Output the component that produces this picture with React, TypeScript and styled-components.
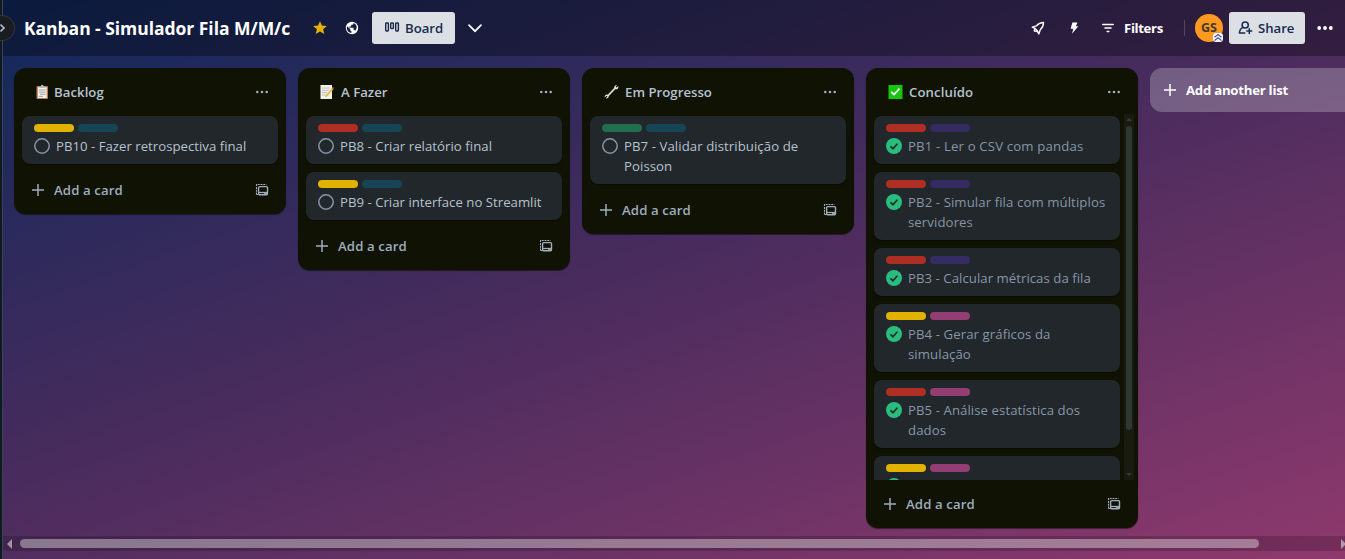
import React from 'react';
import styled, { createGlobalStyle } from 'styled-components';

const Global = createGlobalStyle`
  *, *::before, *::after { box-sizing: border-box; }
  body {
    margin: 0;
    overflow: hidden;
    font-family: 'Open Sans', 'Noto Sans', sans-serif;
    font-size: 13.2px;
    line-height: 20px;
    color: #b6c2cf;
  }
  svg { display: block; flex: none; }
`;

const Page = styled.div`
  display: flex;
  width: 100vw;
  height: 100vh;
  overflow: hidden;
`;

const Rail = styled.div`
  position: relative;
  flex: none;
  width: 3px;
  background: #14181f;
  border-right: 1px solid #344563;
  z-index: 2;
`;

const RailToggle = styled.div`
  position: absolute;
  left: -12px;
  top: 15px;
  width: 27px;
  height: 26px;
  border-radius: 50%;
  background: #1a1d20;
  border: 1px solid #33363a;
  display: flex;
  align-items: center;
  justify-content: center;
  color: #b0bac6;
`;

const BoardArea = styled.main`
  flex: 1;
  min-width: 0;
  display: flex;
  flex-direction: column;
  background: linear-gradient(161deg, #10285a, #492c5d 48%, #8f396d);
`;

const Header = styled.header`
  flex: none;
  height: 56px;
  display: flex;
  align-items: center;
  justify-content: space-between;
  padding-left: 21px;
  background: rgba(0, 0, 0, 0.32);
  color: #fff;
`;

const HeaderGroup = styled.div`
  display: flex;
  align-items: center;
`;

const Title = styled.h1`
  width: 283px;
  margin: 0;
  font-size: 17.5px;
  line-height: 24px;
  font-weight: 700;
  letter-spacing: -0.04px;
  white-space: nowrap;
`;

const IconSlot = styled.span<{ $w: number }>`
  width: ${(p) => p.$w}px;
  height: 32px;
  display: flex;
  align-items: center;
  justify-content: center;
`;

const LightButton = styled.button<{ $w: number; $ml?: number; $pl?: number }>`
  width: ${(p) => p.$w}px;
  height: 32px;
  margin: 0 0 0 ${(p) => p.$ml ?? 0}px;
  padding: 0 0 0 ${(p) => p.$pl ?? 8}px;
  border: 0;
  border-radius: 3px;
  background: #dcdfe4;
  color: #172b4d;
  display: flex;
  align-items: center;
  gap: 5px;
  font: 600 13.2px/20px 'Open Sans', sans-serif;
  letter-spacing: -0.05px;
  white-space: nowrap;
`;

const FiltersButton = styled.div`
  width: 71px;
  display: flex;
  align-items: center;
  gap: 10px;
  font-weight: 700;
  letter-spacing: -0.35px;
`;

const Divider = styled.span`
  width: 1px;
  height: 16px;
  margin: 0 10px 0 11px;
  background: rgba(255, 255, 255, 0.18);
`;

const Avatar = styled.span`
  position: relative;
  width: 28px;
  height: 28px;
  border-radius: 50%;
  background: #ff991f;
  color: #44382e;
  font-size: 12.5px;
  font-weight: 700;
  line-height: 28px;
  text-align: center;
`;

const AvatarBadge = styled.span`
  position: absolute;
  right: 0;
  bottom: 0;
`;

const Lists = styled.div`
  flex: 1;
  min-height: 0;
  display: flex;
  align-items: flex-start;
  gap: 12px;
  padding: 12px 0 0 11px;
  overflow: hidden;
`;

const ListBox = styled.section`
  flex: none;
  width: 272px;
  border-radius: 12px;
  background: #101204;
  box-shadow: 0 1px 1px rgba(3, 4, 4, 0.5);
`;

const ListHeader = styled.div`
  height: 46px;
  padding: 2px 16px 0 20px;
  display: flex;
  align-items: center;
  color: #9fadbc;
`;

const ListTitle = styled.h2<{ $gap: number; $ls: number }>`
  flex: 1;
  margin: 0 0 0 ${(p) => p.$gap}px;
  font-size: 13.2px;
  line-height: 20px;
  font-weight: 600;
  letter-spacing: ${(p) => p.$ls}px;
  color: #b6c2cf;
`;

const ListBody = styled.div<{ $scroll?: boolean }>`
  display: flex;
  justify-content: space-between;
  padding: 0 ${(p) => (p.$scroll ? 4 : 8)}px 0 8px;
  height: ${(p) => (p.$scroll ? '366px' : 'auto')};
  overflow: hidden;
`;

const Cards = styled.div<{ $scroll?: boolean }>`
  width: ${(p) => (p.$scroll ? 246 : 256)}px;
  padding: 2px 0;
  display: flex;
  flex-direction: column;
  gap: 8px;
`;

const CardBox = styled.article`
  flex: none;
  padding: 8px 10px 8px 12px;
  border-radius: 8px;
  background: #22272b;
  box-shadow: 0 1px 1px rgba(3, 4, 4, 0.5);
`;

const Labels = styled.div`
  display: flex;
  gap: 4px;
  margin-bottom: 4px;
`;

const Label = styled.span<{ $color: string }>`
  width: 40px;
  height: 8px;
  border-radius: 4px;
  background: ${(p) => p.$color};
`;

const CardRow = styled.div`
  display: flex;
  gap: 6px;
  svg { margin-top: 2px; }
`;

const CardText = styled.span<{ $done?: boolean; $ls: number }>`
  letter-spacing: ${(p) => p.$ls}px;
  color: ${(p) => (p.$done ? '#8696a7' : '#b6c2cf')};
  white-space: pre;
`;

const ListFooter = styled.div`
  height: 48px;
  padding: 0 17px 0 18px;
  display: flex;
  align-items: center;
  color: #9fadbc;
  font-weight: 600;
`;

const AddText = styled.span`
  flex: 1;
  margin-left: 10px;
  letter-spacing: 0.1px;
`;

const ScrollTrack = styled.div`
  width: 10px;
  height: 366px;
  padding: 4px 2px;
  background: #191b10;
  display: flex;
  flex-direction: column;
  align-items: center;
  justify-content: space-between;
`;

const ScrollThumb = styled.div`
  width: 6px;
  height: 304px;
  margin: 5px 0 auto;
  border-radius: 3px;
  background: #2f3833;
`;

const ScrollArrow = styled.span<{ $down?: boolean }>`
  border: 3px solid transparent;
  border-${(p) => (p.$down ? 'top' : 'bottom')}-color: #333c37;
  border-${(p) => (p.$down ? 'bottom' : 'top')}-width: 0;
`;

const AddList = styled.div`
  flex: none;
  width: 272px;
  height: 44px;
  padding-left: 14px;
  border-radius: 12px;
  background: rgba(255, 255, 255, 0.24);
  color: #fff;
  display: flex;
  align-items: center;
  gap: 10px;
  font-weight: 700;
  letter-spacing: -0.25px;
`;

const BoardScroll = styled.div`
  flex: none;
  height: 15px;
  margin: 0 0 8px;
  padding: 0 0 0 4px;
  display: flex;
  align-items: center;
  overflow: hidden;
  background: rgba(0, 0, 0, 0.18);
`;

const BoardThumb = styled.div`
  flex: none;
  width: 1239px;
  height: 9px;
  margin: 0 82px 0 8px;
  border-radius: 5px;
  background: rgba(255, 255, 255, 0.38);
`;

const SideArrow = styled.span<{ $right?: boolean }>`
  flex: none;
  border: 5px solid transparent;
  border-${(p) => (p.$right ? 'left' : 'right')}-color: rgba(255, 255, 255, 0.5);
  border-${(p) => (p.$right ? 'right' : 'left')}-width: 0;
`;

const Dots = ({ r = 1.3, step = 4.7, size = 16 }: { r?: number; step?: number; size?: number }) => (
  <svg width={size} height={size} viewBox={`0 0 ${size} ${size}`} fill="currentColor">
    {[-1, 0, 1].map((i) => (
      <circle key={i} cx={size / 2 + i * step} cy={size / 2} r={r} />
    ))}
  </svg>
);

const Plus = () => (
  <svg width="12" height="12" viewBox="0 0 12 12" stroke="currentColor" strokeWidth="1.5">
    <path d="M6 0v12M0 6h12" />
  </svg>
);

const Star = () => (
  <svg width="16" height="16" viewBox="0 0 16 16" fill="#e2b203">
    <path d="M8 1.2l1.9 4.4 4.9.4-3.700 3.200 1.200 4.900L8 11.600l-4.300 2.500 1.200-4.900L1.200 6l4.900-.4z" />
  </svg>
);

const Globe = () => (
  <svg width="14" height="14" viewBox="0 0 14 14">
    <circle cx="7" cy="7" r="6.2" fill="#fff" />
    <path d="M2 5.2l3.2 2.9v1.1l1.2 1v1.9C3.900 11.800 1.800 9.700 1.800 7c0-.6.1-1.200.2-1.800zM8.600 2.100v.5c0 .6-.5 1.100-1.200 1.100H6.200v1.200c0 .3-.3.600-.6.600H4.400v1.200H8c.3 0 .6.300.6.600v1.700h.6c.500 0 .9.300 1.100.8 1.800-2.100 2.500-5.900-1.700-7.700z" fill="#151e40" />
  </svg>
);

const BoardIcon = () => (
  <svg width="16" height="16" viewBox="0 0 16 16" fill="none" stroke="currentColor" strokeWidth="1.4">
    <rect x="1.7" y="3" width="2.700" height="8" rx=".7" />
    <rect x="6.700" y="3" width="2.700" height="5.500" rx=".7" />
    <rect x="11.700" y="3" width="2.700" height="8" rx=".7" />
  </svg>
);

const Chevron = () => (
  <svg width="16" height="16" viewBox="0 0 16 16" fill="none" stroke="currentColor" strokeWidth="1.7" strokeLinecap="round">
    <path d="M2 5.200l6 6 6-6" />
  </svg>
);

const Rocket = () => (
  <svg width="16" height="16" viewBox="0 0 16 16" fill="none" stroke="currentColor" strokeWidth="1.400" strokeLinejoin="round" strokeLinecap="round">
    <path d="M13.500 2.500c-3.100.1-5.200 1.200-7.100 3.400L2.300 7.200l2.500 1.100-.5 2.700 3 .4 1.500 2.500 1.600-4.300c2.100-1.900 3.100-4.200 3.100-7.100z" />
    <path d="M4.800 8.300l3 3" />
  </svg>
);

const Bolt = () => (
  <svg width="16" height="16" viewBox="0 0 16 16" fill="currentColor">
    <path d="M6.400 2.500h5L9.900 6.300h2.400L6 13.700l1.300-5H4.600z" />
  </svg>
);

const FilterIcon = () => (
  <svg width="12" height="12" viewBox="0 0 12 12" stroke="currentColor" strokeWidth="1.500" strokeLinecap="round">
    <path d="M.8 2.400h10.400M3 6h6M5.200 9.500h1.600" />
  </svg>
);

const SharePerson = () => (
  <svg width="16" height="16" viewBox="0 0 16 16" fill="none" stroke="currentColor" strokeWidth="1.500" strokeLinecap="round">
    <circle cx="8.200" cy="5" r="3.100" />
    <path d="M6 7.400c-2.400 1-3.500 2.700-3.500 5.700h5.200M12.300 8.700v4.800M9.900 11.100h4.800" />
  </svg>
);

const AdminBadge = () => (
  <svg width="10" height="9" viewBox="0 0 10 9">
    <rect width="10" height="9" rx="3" fill="#fff" />
    <path d="M1.500 4.300L5 1.500l3.500 2.800M1.500 7.600L5 4.800l3.500 2.800" fill="none" stroke="#4b4fb5" strokeWidth="1.300" />
  </svg>
);

const TemplateIcon = () => (
  <svg width="14" height="14" viewBox="0 0 14 14" fill="none" stroke="currentColor">
    <path d="M1.500 11.500V1.500H11.500" strokeWidth="1.100" strokeDasharray="2 .8" />
    <path d="M1.500 11.500h2" strokeWidth="1" />
    <rect x="3.600" y="3.600" width="8.900" height="8.200" rx="1" strokeWidth="1.400" />
    <path d="M3.600 9.500h8.900" strokeWidth="1.300" />
    <path d="M9 10.800h3.500" strokeWidth="1.400" />
  </svg>
);

const Check = ({ done }: { done?: boolean }) => (
  <svg width="16" height="16" viewBox="0 0 16 16" fill="none">
    {done ? (
      <>
        <circle cx="8" cy="8" r="8" fill="#2abb7f" />
        <path d="M4.500 8.300l2.400 2.400 4.500-5" stroke="#1d2f2c" strokeWidth="1.700" />
      </>
    ) : (
      <circle cx="8" cy="8" r="7.200" stroke="#8696a7" strokeWidth="1.500" />
    )}
  </svg>
);

const Clipboard = () => (
  <svg width="16" height="16" viewBox="0 0 16 16">
    <rect x="2.500" y="2" width="11.500" height="13" rx=".8" fill="#b87b52" />
    <rect x="3.800" y="3.200" width="8.900" height="10.800" fill="#f4f1ee" />
    <path d="M5.300 3.800V2.200h1.500a1.400 1.400 0 0 1 2.800 0H11v1.600z" fill="#aeb2b5" />
    <path d="M4.800 6h6.700M4.800 8.200h6.700M6 10.300h5.500M4.800 12.400h4.200" stroke="#999" strokeWidth=".9" />
  </svg>
);

const Memo = () => (
  <svg width="16" height="16" viewBox="0 0 16 16">
    <path d="M2.500 1H14v14H2.500z" fill="#f0f0ed" />
    <path d="M4 4h8M4 6.300h7M4 8.600h5M4 11h4" stroke="#b6b8ba" strokeWidth=".9" />
    <path d="M7.500 11.500L14 4l1.500 1.300L9 12.400l-2.100.8z" fill="#f2b63a" />
    <path d="M13.500 4.500L15 3l1 1-1.200 1.600z" fill="#d85b72" />
  </svg>
);

const Wrench = () => (
  <svg width="16" height="16" viewBox="0 0 16 16" fill="none" overflow="visible">
    <g transform="translate(1.500 0)">
      <path d="M4.300 11.900l7.600-8" stroke="#d5d5d5" strokeWidth="1.800" />
      <path d="M14.800 1.900l-1.800 1.700-1-.9 1.500-1.700c-1.900-.1-3.200 1.300-2.700 3.200l1.400 1.100c1.800.3 3-1.500 2.600-3.400z" fill="#e8e8e8" />
      <path d="M1.200 13.500l1.800-1.800 1 .9-1.800 2c2 .2 3.400-1.200 2.900-3l-1.300-1.200c-1.800-.2-3 1.400-2.600 3.100z" fill="#e8e8e8" />
    </g>
  </svg>
);

const DoneEmoji = () => (
  <svg width="16" height="16" viewBox="0 0 16 16" overflow="visible">
    <rect x="2.500" y="1" width="14" height="14" fill="#16c60c" />
    <path d="M5.300 7.800l2.700 2.700 5.500-5.800" fill="none" stroke="#fff" strokeWidth="1.800" />
  </svg>
);

const RED = '#ae2e24';
const YELLOW = '#e2b203';
const TEAL = '#164555';
const GREEN = '#216e4e';
const PURPLE = '#352c63';
const PINK = '#943d73';

type CardData = { text: string; labels: [string, string]; done?: boolean; ls?: number };
type ListData = {
  title: string;
  icon: React.ReactNode;
  gap: number;
  ls: number;
  scroll?: boolean;
  cards: CardData[];
};

const lists: ListData[] = [
  {
    title: 'Backlog', icon: <Clipboard />, gap: 4, ls: 0.05,
    cards: [{ text: 'PB10 - Fazer retrospectiva final', labels: [YELLOW, TEAL], ls: 0.01 }],
  },
  {
    title: 'A Fazer', icon: <Memo />, gap: 7, ls: 0,
    cards: [
      { text: 'PB8 - Criar relatório final', labels: [RED, TEAL], ls: 0.04 },
      { text: 'PB9 - Criar interface no Streamlit', labels: [YELLOW, TEAL], ls: 0.01 },
    ],
  },
  {
    title: 'Em Progresso', icon: <Wrench />, gap: 7, ls: 0.02,
    cards: [{ text: 'PB7 - Validar distribuição de\nPoisson', labels: [GREEN, TEAL], ls: 0.07 }],
  },
  {
    title: 'Concluído', icon: <DoneEmoji />, gap: 7, ls: 0.1, scroll: true,
    cards: [
      { text: 'PB1 - Ler o CSV com pandas', labels: [RED, PURPLE], done: true, ls: 0.15 },
      { text: 'PB2 - Simular fila com múltiplos\nservidores', labels: [RED, PURPLE], done: true, ls: 0.09 },
      { text: 'PB3 - Calcular métricas da fila', labels: [RED, PURPLE], done: true, ls: 0.04 },
      { text: 'PB4 - Gerar gráficos da\nsimulação', labels: [YELLOW, PINK], done: true, ls: 0.08 },
      { text: 'PB5 - Análise estatística dos\ndados', labels: [RED, PINK], done: true, ls: 0.07 },
      { text: '', labels: [YELLOW, PINK], done: true },
    ],
  },
];

const Card = ({ card }: { card: CardData }) => (
  <CardBox>
    <Labels>
      {card.labels.map((c) => (
        <Label key={c} $color={c} />
      ))}
    </Labels>
    <CardRow>
      <Check done={card.done} />
      <CardText $done={card.done} $ls={card.ls ?? 0}>{card.text}</CardText>
    </CardRow>
  </CardBox>
);

const List = ({ list }: { list: ListData }) => (
  <ListBox>
    <ListHeader>
      {list.icon}
      <ListTitle $gap={list.gap} $ls={list.ls}>{list.title}</ListTitle>
      <Dots />
    </ListHeader>
    <ListBody $scroll={list.scroll}>
      <Cards $scroll={list.scroll}>
        {list.cards.map((c, i) => (
          <Card key={i} card={c} />
        ))}
      </Cards>
      {list.scroll && (
        <ScrollTrack>
          <ScrollArrow />
          <ScrollThumb />
          <ScrollArrow $down />
        </ScrollTrack>
      )}
    </ListBody>
    <ListFooter>
      <Plus />
      <AddText>Add a card</AddText>
      <TemplateIcon />
    </ListFooter>
  </ListBox>
);

export default function App() {
  return (
    <Page>
      <Global />
      <Rail>
        <RailToggle>
          <svg width="8" height="10" viewBox="0 0 8 10" fill="none" stroke="currentColor" strokeWidth="1.700">
            <path d="M2.500 1.500L6 5 2.500 8.500" />
          </svg>
        </RailToggle>
      </Rail>
      <BoardArea>
        <Header>
          <HeaderGroup>
            <Title>Kanban - Simulador Fila M/M/c</Title>
            <IconSlot $w={26}><Star /></IconSlot>
            <IconSlot $w={38}><Globe /></IconSlot>
            <LightButton $w={83} $ml={1} $pl={12}>
              <BoardIcon />
              Board
            </LightButton>
            <IconSlot $w={40}><Chevron /></IconSlot>
          </HeaderGroup>
          <HeaderGroup>
            <IconSlot $w={36}><Rocket /></IconSlot>
            <IconSlot $w={36}><Bolt /></IconSlot>
            <IconSlot $w={10} />
            <FiltersButton>
              <FilterIcon />
              Filters
            </FiltersButton>
            <Divider />
            <Avatar>
              GS
              <AvatarBadge><AdminBadge /></AvatarBadge>
            </Avatar>
            <LightButton $w={76} $ml={6}>
              <SharePerson />
              Share
            </LightButton>
            <IconSlot $w={40}><Dots r={1.9} step={5.8} /></IconSlot>
          </HeaderGroup>
        </Header>
        <Lists>
          {lists.map((l) => (
            <List key={l.title} list={l} />
          ))}
          <AddList>
            <Plus />
            Add another list
          </AddList>
        </Lists>
        <BoardScroll>
          <SideArrow />
          <BoardThumb />
          <SideArrow $right />
        </BoardScroll>
      </BoardArea>
    </Page>
  );
}
